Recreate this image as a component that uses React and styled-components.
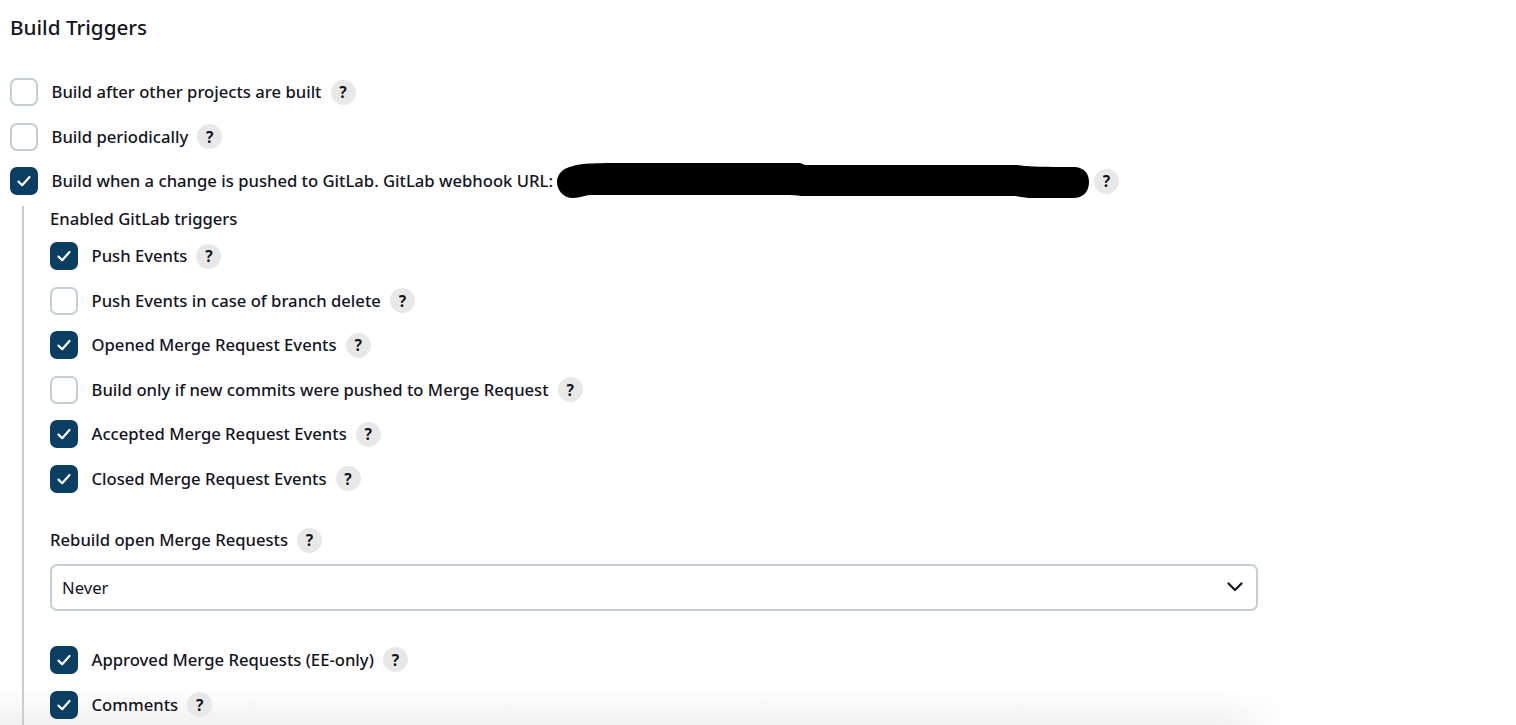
import React from "react";
import styled, { createGlobalStyle } from "styled-components";

const Global = createGlobalStyle`
  html { background: #fff; }
  html, body { margin: 0; padding: 0; height: 100%; overflow: hidden; }
  body { font-family: "Noto Sans", "Open Sans", sans-serif; color: #14141f; }
`;
const Page = styled.main`
  height: 725px; overflow: hidden; padding: 13px 10px 0; box-sizing: border-box;
`;
const Title = styled.h2`
  margin: 0 0 37px; font-size: 20.7px; line-height: 28px; font-weight: 500;
`;
const Row = styled.div`
  display: flex; align-items: center; height: 28px; margin-bottom: ${p => p.$mb ?? 16.5}px;
`;
const Box = styled.span`
  width: 28px; height: 28px; box-sizing: border-box; border-radius: 7px; flex: none;
  display: flex; align-items: center; justify-content: center; margin-right: 13.5px;
  background: ${p => (p.$on ? "#0b3f62" : "#fff")};
  border: ${p => (p.$on ? "none" : "2.5px solid #c3cfd3")};
`;
const Label = styled.span`
  font-size: 16.65px; font-weight: 500; line-height: 24px; white-space: nowrap;
`;
const Help = styled.span`
  width: 25px; height: 25px; border-radius: 50%; background: #e8e8e9; flex: none;
  display: flex; align-items: center; justify-content: center;
  font-size: 15.5px; font-weight: 700; margin-left: ${p => p.$ml ?? 9}px;
`;
const Nested = styled.section`
  border-left: 2px solid #c3cfd3; margin-left: 12px; padding-left: 26px; margin-top: 11px; padding: 1px 0 40px 26px;
`;
const Heading = styled.div`
  display: flex; align-items: center; font-size: 16.65px; font-weight: 500; line-height: 24px;
  height: ${p => p.$h ?? 24}px; margin-bottom: ${p => p.$mb ?? 11}px;
`;
const Select = styled.div`
  width: 1208px; height: 47px; box-sizing: border-box; border: 2px solid #c3cfd3; border-radius: 7px;
  display: flex; align-items: center; justify-content: space-between; padding: 0 13px 0 10px;
  font-size: 16.65px; margin-bottom: 35px;
`;
const Fade = styled.div`
  position: absolute; left: 0; bottom: 0; width: 1290px; height: 36px; pointer-events: none; z-index: -1;
  background: linear-gradient(to bottom, rgba(240,240,241,0), rgba(240,240,241,.95));
  -webkit-mask-image: linear-gradient(to right, #000 94%, transparent 100%);
  mask-image: linear-gradient(to right, #000 94%, transparent 100%);
`;
const Redact = styled.svg`
  flex: none; margin-left: 2px; display: block;
`;

const Check = () => (
  <svg width="16" height="16" viewBox="0 0 16 16" fill="none" stroke="#fff" strokeWidth="2.2" strokeLinecap="round" strokeLinejoin="round">
    <path d="M2.5 8.6 6.2 12.2 13.5 4" />
  </svg>
);
const Item = ({ on, label, ml, mb, children }) => (
  <Row $mb={mb}>
    <Box $on={on}>{on && <Check />}</Box>
    <Label>{label}</Label>
    {children}
    <Help $ml={ml}>?</Help>
  </Row>
);

export default function App() {
  return (
    <Page>
      <Global />
      <Title>Build Triggers</Title>
      <Item label="Build after other projects are built" />
      <Item label="Build periodically" />
      <Item on label="Build when a change is pushed to GitLab. GitLab webhook URL:" ml={3} mb={0}>
        <Redact width="536" height="38" viewBox="0 0 536 38">
          <path fill="#000" d="M18 4 C24 2 30 1 70 1 L245 1 L250 3 L462 3 C470 4 475 5 520 5 C530 6 534 12 534 20 C534 30 528 36 518 36 L478 36 C472 36 468 35 460 34 L245 34 C238 33 232 33 35 33 C30 33 26 36 18 36 C8 36 2 28 2 20 C2 12 8 6 18 4 Z" />
        </Redact>
      </Item>
      <Nested>
        <Heading>Enabled GitLab triggers</Heading>
        <Item on label="Push Events" />
        <Item label="Push Events in case of branch delete" />
        <Item on label="Opened Merge Request Events" />
        <Item label="Build only if new commits were pushed to Merge Request" />
        <Item on label="Accepted Merge Request Events" />
        <Item on label="Closed Merge Request Events" mb={35} />
        <Heading $h={25}>Rebuild open Merge Requests<Help>?</Help></Heading>
        <Select>
          Never
          <svg width="16" height="10" viewBox="0 0 16 10" fill="none" stroke="#14141f" strokeWidth="2.2" strokeLinecap="round" strokeLinejoin="round">
            <path d="M1.5 1.5 8 8 14.5 1.5" />
          </svg>
        </Select>
        <Item on label="Approved Merge Requests (EE-only)" mb={17} />
        <Item on label="Comments" />
      </Nested>
      <Fade />
    </Page>
  );
}
